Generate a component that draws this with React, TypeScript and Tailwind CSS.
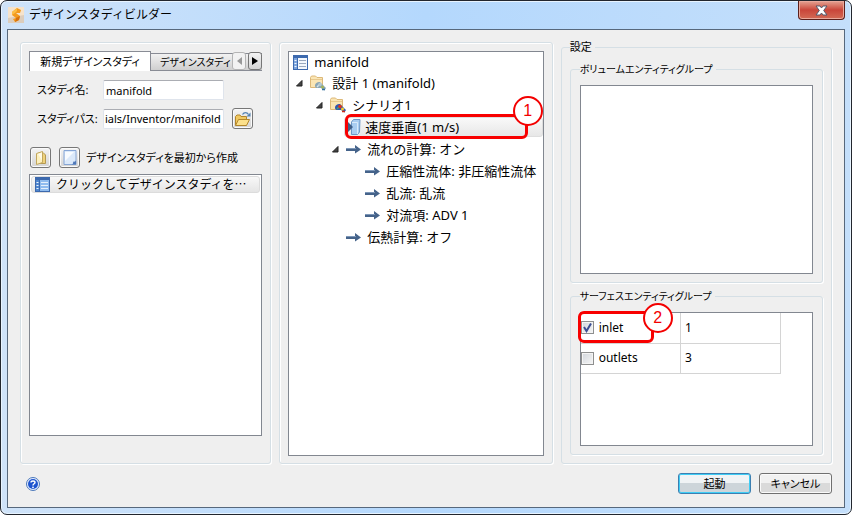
import type { ReactNode } from "react";
import clsx from "clsx";

const UI_FONT = "font-['Noto_Sans','Noto_Sans_CJK_JP',sans-serif]";
// Proportional kana for the compact labels
const COMPACT = "text-[11px] leading-[14px] [font-feature-settings:'palt']";
const COMPACT_SMALL = "text-[10px] leading-[14px] [font-feature-settings:'palt']";

function AppIcon() {
  return (
    <svg width="16" height="16" viewBox="0 0 16 16" aria-hidden="true">
      <rect width="16" height="16" fill="#f6e3cb" />
      <path d="M0 11L16 8V16H0Z" fill="#dccdbc" />
      <path d="M4 5L9 1L13 3L12 6L8 6L12 9L11 13L7 15L5 12L8 11L4 8Z" fill="#f39a1d" />
      <path d="M4 5L9 1L9 4L7 6L4 8Z" fill="#fbbd45" />
      <path d="M8 11L12 9L11 13L7 15Z" fill="#d8700b" />
    </svg>
  );
}

function TableIcon({ selected = false }: { selected?: boolean }) {
  return (
    <svg width="15" height="15" viewBox="0 0 15 15" aria-hidden="true" className="shrink-0">
      <rect x=".5" y=".5" width="14" height="14" fill={selected ? "#8fbcef" : "#f4f8fd"} stroke="#3c69ae" />
      <path d="M1 1h13v2H1zM4 3h1v11H4z" fill="#3c69ae" />
      <path d="M1 3h3v11H1z" fill={selected ? "#4f86cf" : "#7ba3dc"} />
      <path d="M1.500 5h2v1h-2zM1.500 8h2v1h-2zM1.500 11h2v1h-2z" fill="#eef5fd" />
      <path d="M6 5.500h7M6 8.500h7M6 11.500h7" stroke={selected ? "#e4f0fc" : "#9aa9bf"} />
    </svg>
  );
}

function FolderIcon({ accent }: { accent: "plain" | "hot" }) {
  const hot = accent === "hot";
  return (
    <svg width="16" height="16" viewBox="0 0 16 16" aria-hidden="true" className="shrink-0">
      <path d="M.5 12.500V2.500L1.500 1h4L7 2.500H12.500V12.500z" fill="#fae5b4" stroke="#dcb878" />
      <path d="M1 4.500H12" stroke="#e8c98d" />
      <path d="M5 10.500C5 8 8 6.500 10 7l3 3 3 3-1.500 2.500L11 13H7C5.500 13 5 12 5 10.500z" fill={hot ? "#3159b0" : "#8ba6b4"} />
      <path d="M7 12l4-4" stroke={hot ? "#49a865" : "#d8e4e8"} strokeWidth="1.500" />
      <circle cx="10" cy="9.500" r="1.800" fill={hot ? "#e0301f" : "#b3c8d0"} />
      <circle cx="12.500" cy="12" r="1.500" fill={hot ? "#f4cb2c" : "#a3b35a"} />
      <path d="M12 14.500h3" stroke={hot ? "#c92a1b" : "#2f6f9e"} strokeWidth="1.500" />
    </svg>
  );
}

function InletIcon() {
  return (
    <svg width="16" height="16" viewBox="0 0 16 16" aria-hidden="true" className="shrink-0">
      <path d="M6.500 3L8.500.5H15L14.500 13 12.500 15.500H6.500z" fill="#a9cdf1" stroke="#6d97c6" />
      <path d="M7 3.500H12.500V15" fill="none" stroke="#d9eafa" />
      <path d="M0 5.500h3V3l5 5-5 5v-2.500H0z" fill="#3f5f88" />
    </svg>
  );
}

function ArrowIcon() {
  return (
    <svg width="15" height="10" viewBox="0 0 15 10" aria-hidden="true" className="shrink-0">
      <path d="M0 4h9V1l6 4.500L9 9.500V7H0z" fill="#45638a" />
      <path d="M0 4.500h10" stroke="#7d97b8" />
    </svg>
  );
}

function Expander() {
  return (
    <svg width="7" height="7" viewBox="0 0 7 7" aria-hidden="true" className="shrink-0">
      <path d="M6 .5V6H.5z" fill="#444" stroke="#222" />
    </svg>
  );
}

function OpenFolderIcon() {
  return (
    <svg width="17" height="16" viewBox="0 0 17 16" aria-hidden="true">
      <path d="M1.500 14V5.500L3 4h3l1 1.500h5.500V14z" fill="#f0c860" stroke="#b3862a" />
      <path d="M1.500 14.500L4.500 8.500H15.500L12.500 14.500z" fill="#fbe08b" stroke="#b3862a" />
      <path d="M8.500 3.500C10 1 13 1 14.500 3.500" fill="none" stroke="#5583b3" strokeWidth="1.300" />
      <path d="M16.500 1.500V5.500H12.500z" fill="#5583b3" />
    </svg>
  );
}

function YellowPageIcon() {
  return (
    <svg width="14" height="16" viewBox="0 0 14 16" aria-hidden="true">
      <path d="M5 2.500H9L11.500 5V13.500H5z" fill="#efd27c" stroke="#b59a52" />
      <path d="M2.500 3.500L8.500 1.500V12.500L2.500 14.500z" fill="#fdf0bd" stroke="#c2a75d" />
      <path d="M4 4l4-1.500v8z" fill="#fffae6" />
    </svg>
  );
}

function BluePageIcon() {
  return (
    <svg width="16" height="17" viewBox="0 0 16 17" aria-hidden="true">
      <path d="M2 1.500H14V15.500H2z" fill="#dbe9fa" stroke="#86a6d6" />
      <path d="M3 3h9L3 12z" fill="#f7fbff" />
      <path d="M9.500 15.500C11 15 11.500 14 11 12.500 12.500 13 14 12.500 14 11V15.500z" fill="#4f78b8" />
    </svg>
  );
}

function HelpIcon() {
  return (
    <svg width="14" height="14" viewBox="0 0 14 14" aria-hidden="true">
      <circle cx="7" cy="7" r="6.500" fill="#e6efff" stroke="#4c78ba" />
      <circle cx="7" cy="7" r="5" fill="#1d54cf" />
      <path d="M5 5.500C5 3.500 9 3.500 9 5.500 9 6.800 7 6.800 7 8.500" fill="none" stroke="#fff" strokeWidth="1.400" />
      <circle cx="7" cy="10.300" r=".9" fill="#fff" />
    </svg>
  );
}

function Panel({ className, children }: { className?: string; children: ReactNode }) {
  return (
    <section
      className={clsx(
        "flex min-w-0 flex-col rounded-[3px] border border-[#d5dfe5] px-2 pt-2 shadow-[inset_1px_1px_0_#fff,1px_1px_0_#fff]",
        className
      )}
    >
      {children}
    </section>
  );
}

interface GroupProps {
  title: string;
  titleClass: string;
  className?: string;
  children: ReactNode;
}

function Group({ title, titleClass, className, children }: GroupProps) {
  return (
    <fieldset
      className={clsx(
        "flex min-w-0 flex-col rounded-[3px] border border-[#d5dfe5] shadow-[1px_1px_0_#fff]",
        className
      )}
    >
      <legend className={clsx("pr-[3px] whitespace-nowrap", titleClass)}>{title}</legend>
      {children}
    </fieldset>
  );
}

function ToolButton({ label, children }: { label: string; children: ReactNode }) {
  return (
    <button
      type="button"
      aria-label={label}
      className="flex size-[21px] shrink-0 items-center justify-center rounded-[3px] border border-[#777] bg-linear-to-b from-[#f4f4f4] to-[#d4d4d4] shadow-[inset_0_0_0_1px_#fafafa]"
    >
      {children}
    </button>
  );
}

function Marker({ value, className }: { value: number; className: string }) {
  return (
    <span
      className={clsx(
        "absolute z-10 flex size-[30px] items-center justify-center rounded-full border-2 border-[#f30000] bg-white font-['Liberation_Sans',sans-serif] text-[16px] leading-none text-[#f30000]",
        className
      )}
    >
      {value}
    </span>
  );
}

interface TreeRowProps {
  indent: string;
  icon: ReactNode;
  text: string;
  open?: boolean;
}

function TreeRow({ indent, icon, text, open }: TreeRowProps) {
  return (
    <li className={clsx("flex h-[22px] items-center", indent)}>
      <span className="w-[14px] shrink-0">{open && <Expander />}</span>
      <span className="flex items-center gap-[6px] whitespace-nowrap">
        {icon}
        {text}
      </span>
    </li>
  );
}

const surfaces = [
  { name: "inlet", count: 1, checked: true },
  { name: "outlets", count: 3, checked: false },
];

export default function App() {
  return (
    <div className={clsx("bg-white text-black", UI_FONT)}>
      <div className="flex min-h-screen flex-col rounded-[7px] border border-[#22262e] bg-linear-to-r from-[#cfe3f9] via-[#b4d8fd] to-[#c4dffb] px-[6px] pb-[6px] shadow-[inset_0_0_0_1px_#e8f4ff]">
        <header className="flex h-7 items-center justify-between">
          <h1 className="flex items-center gap-[5px] pl-px text-[12px] leading-4">
            <AppIcon />
            デザインスタディビルダー
          </h1>
          <button
            type="button"
            aria-label="閉じる"
            className="flex h-[19px] w-[47px] items-center justify-center self-start rounded-b-[4px] border border-t-0 border-[#5b1f1b] bg-linear-to-b from-[#e3a293] via-[#c9453a] via-50% to-[#d36a55] shadow-[inset_0_0_0_1px_#e9a99c]"
          >
            <svg width="13" height="11" viewBox="0 0 13 11" aria-hidden="true">
              <path
                d="M1 1h4l1.500 2L8 1h4L8.700 5.500 12 10H8L6.500 8 5 10H1l3.300-4.500z"
                fill="#fff"
                stroke="#53586a"
              />
            </svg>
          </button>
        </header>

        <main className="flex flex-1 flex-col border border-[#57687c] bg-[#efefef] px-3 pt-[10px] pb-[13px]">
          <div className="grid flex-1 grid-cols-[minmax(0,252fr)_minmax(0,274fr)_minmax(0,272fr)] gap-2">
            <Panel className="mt-[2px] pb-[27px]">
              <div className="relative flex h-5 items-end overflow-hidden" role="tablist">
                <button
                  type="button"
                  role="tab"
                  aria-selected="true"
                  className={clsx("h-5 w-[122px] shrink-0 border border-b-0 border-[#898c95] bg-white whitespace-nowrap", COMPACT)}
                >
                  新規デザインスタディ
                </button>
                <button
                  type="button"
                  role="tab"
                  aria-selected="false"
                  className={clsx("h-[18px] flex-1 border border-x-0 border-[#898c95] bg-linear-to-b from-[#f2f2f2] to-[#cfcfcf] pl-[9px] text-left whitespace-nowrap", COMPACT_SMALL)}
                >
                  デザインスタディ
                </button>
                <div className="absolute top-px right-0 flex h-[18px] gap-[2px]">
                  <button
                    type="button"
                    aria-label="前のタブ"
                    className="flex w-[14px] items-center justify-center rounded-[3px] border border-[#b5b5b5] bg-[#f2f2f2]"
                  >
                    <svg width="5" height="8" viewBox="0 0 5 8" aria-hidden="true">
                      <path d="M5 0v8L0 4z" fill="#999" />
                    </svg>
                  </button>
                  <button
                    type="button"
                    aria-label="次のタブ"
                    className="flex w-[14px] items-center justify-center rounded-[3px] border border-[#777] bg-linear-to-b from-[#f4f4f4] to-[#d4d4d4]"
                  >
                    <svg width="6" height="8" viewBox="0 0 6 8" aria-hidden="true">
                      <path d="M0 0v8L6 4z" fill="#000" />
                    </svg>
                  </button>
                </div>
              </div>

              <div className="grid grid-cols-[66px_minmax(0,1fr)_21px] items-center gap-x-2 gap-y-2 pt-[9px] pr-[9px] pl-2">
                <label htmlFor="study-name" className={clsx("whitespace-nowrap", COMPACT)}>
                  スタディ名:
                </label>
                <input
                  id="study-name"
                  defaultValue="manifold"
                  className="-ml-2 h-5 w-[121px] rounded-[2px] border border-[#dfe4ec] border-t-[#abadb3] bg-white px-[2px] text-[11px]"
                />
                <span />
                <label htmlFor="study-path" className={clsx("whitespace-nowrap", COMPACT)}>
                  スタディパス:
                </label>
                <input
                  id="study-path"
                  defaultValue="ials/Inventor/manifold"
                  className="-ml-2 h-5 w-[121px] rounded-[2px] border border-[#dfe4ec] border-t-[#abadb3] bg-white px-px text-[11px]"
                />
                <ToolButton label="フォルダを開く">
                  <OpenFolderIcon />
                </ToolButton>
              </div>

              <div className="flex items-center pt-[18px] pb-[6px] pl-px">
                <ToolButton label="新規">
                  <YellowPageIcon />
                </ToolButton>
                <span className="ml-2 flex">
                  <ToolButton label="空のスタディ">
                    <BluePageIcon />
                  </ToolButton>
                </span>
                <span className={clsx("ml-[6px] whitespace-nowrap", COMPACT)}>
                  デザインスタディを最初から作成
                </span>
              </div>

              <ul className="flex-1 border border-[#828790] bg-white p-px">
                <li className="flex h-[17px] items-center gap-[6px] overflow-hidden rounded-[3px] border border-[#dcdcdc] bg-linear-to-b from-[#f8f8f8] to-[#e5e5e5] pl-[3px] text-[12px] leading-4 whitespace-nowrap">
                  <TableIcon selected />
                  <span>
                    クリックしてデザインスタディを
                    <span className="font-['Noto_Sans_CJK_JP',sans-serif]">…</span>
                  </span>
                </li>
              </ul>
            </Panel>

            <Panel className="mt-[2px] pb-[7px]">
              <ul className="flex-1 border border-[#828790] bg-white text-[13px] leading-5">
                <li className="flex h-5 items-center gap-[6px] pl-1">
                  <TableIcon />
                  manifold
                </li>
                <TreeRow indent="pl-[7px]" open icon={<FolderIcon accent="plain" />} text="設計 1 (manifold)" />
                <TreeRow indent="pl-[27px]" open icon={<FolderIcon accent="hot" />} text="シナリオ1" />
                <li className="relative flex h-[22px] items-center pl-[55px]">
                  <span className="flex h-5 flex-1 items-center gap-1 rounded-[3px] border border-[#dedede] bg-linear-to-b from-[#f9f9f9] to-[#e7e7e7] whitespace-nowrap">
                    <InletIcon />
                    速度垂直(1 m/s)
                  </span>
                  <span className="absolute -top-[2px] right-[15px] left-[56px] h-[25px] rounded-[6px] border-3 border-[#f80000]" />
                  <Marker value={1} className="-top-[20px] right-0" />
                </li>
                <TreeRow indent="pl-[43px]" open icon={<ArrowIcon />} text="流れの計算: オン" />
                <TreeRow indent="pl-[62px]" icon={<ArrowIcon />} text="圧縮性流体: 非圧縮性流体" />
                <TreeRow indent="pl-[62px]" icon={<ArrowIcon />} text="乱流: 乱流" />
                <TreeRow indent="pl-[62px]" icon={<ArrowIcon />} text="対流項: ADV 1" />
                <TreeRow indent="pl-[43px]" icon={<ArrowIcon />} text="伝熱計算: オフ" />
              </ul>
            </Panel>

            <Group title="設定" titleClass={COMPACT} className="px-2 pb-2">
              <div className="flex h-full flex-col gap-[6px] pt-2">
                <Group title="ボリュームエンティティグループ" titleClass={COMPACT_SMALL} className="flex-[219] px-[9px] pb-2">
                  <div className="mt-[9px] h-[189px] border border-[#828790] bg-white" />
                </Group>
                <Group title="サーフェスエンティティグループ" titleClass={COMPACT_SMALL} className="flex-[165] px-[9px] pb-2">
                  <div className="mt-[9px] h-[134px] border border-[#828790] bg-white">
                    <table className="w-[200px] table-fixed border-collapse text-[12px]">
                      <tbody>
                        {surfaces.map((s) => (
                          <tr key={s.name} className="h-[30px]">
                            <td className="relative border-r border-b border-[#d4d4d4] p-0">
                              <label className="flex items-center gap-[5px]">
                                <span className="relative flex">
                                  <input
                                    type="checkbox"
                                    defaultChecked={s.checked}
                                    className="peer size-[13px] appearance-none border border-[#8e8f8f] bg-linear-to-br from-[#d2d6dc] to-[#f6f6f6] shadow-[inset_0_0_0_1px_#f4f4f4]"
                                  />
                                  <svg
                                    viewBox="0 0 13 13"
                                    aria-hidden="true"
                                    className="pointer-events-none absolute inset-0 hidden size-[13px] peer-checked:block"
                                  >
                                    <path d="M3 6l2.500 4L10 2.500" fill="none" stroke="#3c4f93" strokeWidth="2" />
                                  </svg>
                                </span>
                                {s.name}
                              </label>
                              {s.checked && (
                                <>
                                  <span className="absolute -top-[2px] -left-[3px] h-8 w-[76px] rounded-[6px] border-3 border-[#f80000]" />
                                  <Marker value={2} className="-top-[10px] left-[62px]" />
                                </>
                              )}
                            </td>
                            <td className="border-r border-b border-[#d4d4d4] px-1 py-0">{s.count}</td>
                          </tr>
                        ))}
                      </tbody>
                    </table>
                  </div>
                </Group>
              </div>
            </Group>
          </div>

          <footer className="flex items-center justify-between pt-[9px] pl-[6px]">
            <button type="button" aria-label="ヘルプ">
              <HelpIcon />
            </button>
            <div className="flex gap-2">
              <button
                type="button"
                className={clsx("h-[21px] w-[73px] rounded-[3px] border border-[#3c7fb1] bg-linear-to-b from-[#f0f3f5] from-50% to-[#cdd5da] to-50% shadow-[inset_0_0_0_1px_#3fcdf5]", COMPACT)}
              >
                起動
              </button>
              <button
                type="button"
                className={clsx("h-[21px] w-[73px] rounded-[3px] border border-[#707070] bg-linear-to-b from-[#f1f1f1] from-50% to-[#dadada] to-50% shadow-[inset_0_0_0_1px_#fafafa]", COMPACT)}
              >
                キャンセル
              </button>
            </div>
          </footer>
        </main>
      </div>
    </div>
  );
}
